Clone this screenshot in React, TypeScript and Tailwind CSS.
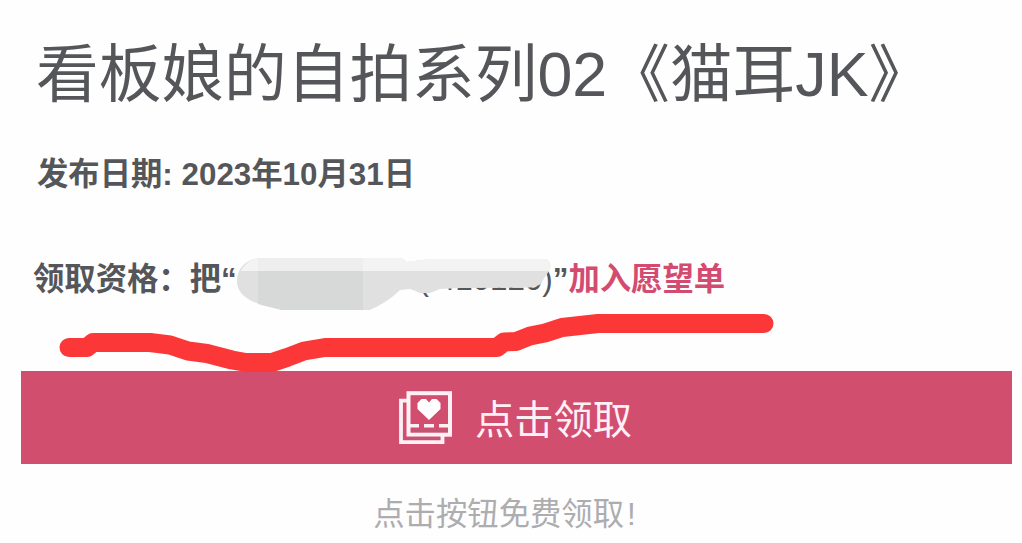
const sans = "font-['Liberation_Sans','Noto_Sans_CJK_SC',sans-serif]";

function GalleryIcon() {
  return (
    <svg width="54" height="54" viewBox="0 0 54 54" fill="none" className="shrink-0">
      <path d="M9 9.7H2V51.2H43.5V44" stroke="#fff0f5" strokeWidth="3.8" />
      <rect x="9.5" y="2.2" width="41.5" height="41.5" stroke="#fff0f5" strokeWidth="4" />
      <path d="M30 29 18.5 18V12L22.5 8H27L30 11.5 33 8H37.5L41.5 12V18Z" fill="#fff" />
      <path d="M11 34.7h9M25 34.7h10M40 34.7h10" stroke="#fff0f5" strokeWidth="3.4" />
      <path d="M12 39.5h37M6 46.8h35" stroke="#bd5874" strokeWidth="2" />
    </svg>
  );
}

// Smudge that hides the product name
function Smudge() {
  return (
    <svg width="340" height="60" viewBox="230 255 340 60" className="absolute -left-[7px] -top-[3px]">
      <path d="M258 258H402L406 262 430 259H546Q553 263 549 271L543 280Q541 287 530 287.5L460 288 440 289 430 293H420L411 289 400 290Q388 302 370 310H282L262 305Q236 297 237 280 238 262 258 258Z" fill="#e0e0e0" />
      <path d="M258 258H402L406 262 430 259H546Q553 263 549 271H241Q246 261 258 258Z" fill="#f3f3f3" />
      <path d="M258 258H363V271H258Z" fill="#eeeeee" />
      <path d="M258 271H363V310H282L258 304Z" fill="#d7d8d8" />
    </svg>
  );
}

function Underline() {
  return (
    <svg width="730" height="70" viewBox="50 305 730 70" className="absolute left-[50px] top-[305px]">
      <path
        d="M69 347.5H87L93 342.5H150L170 345 188 351 207 353.5 232 360 246 362.5H272L287 357.5 304 351 325 347.5H497L504 342 516 341.5 530 336 545 333 562 327.5 580 325.5 598 323.5H764"
        fill="none"
        stroke="#fb3737"
        strokeWidth="19"
        strokeLinecap="round"
        strokeLinejoin="round"
      />
    </svg>
  );
}

export default function App() {
  return (
    <main className={`relative flex h-[543px] w-[1022px] flex-col overflow-hidden bg-[#fefefe] text-[#55565a] ${sans}`}>
      <h1 className="mt-[42px] ml-[36px] h-[64px] whitespace-nowrap text-[62.7px] leading-[64px]">
        看板娘的自拍系列02《猫耳JK》
      </h1>
      <p className="mt-[49px] ml-[37px] h-[40px] whitespace-nowrap text-[31.35px] leading-[40px] font-bold">
        发布日期: 2023年10月31日
      </p>
      <div className="mt-[63px] ml-[33px] flex h-[44px] items-center whitespace-nowrap text-[31.35px] leading-[44px] font-bold">
        <span>领取资格：把“</span>
        <span className="relative flex h-[44px] w-[316px] justify-end">
          <span className="font-normal">.(.410120)</span>
          <Smudge />
        </span>
        <span>”</span>
        <a href="#" className="text-[#d34b70]">加入愿望单</a>
      </div>
      <button className="mt-[69px] ml-[21px] flex h-[93px] w-[991px] items-center justify-center gap-[22px] bg-[#d24e6f] pr-[2px] text-[39.3px] text-[#fff0f5]">
        <GalleryIcon />
        <span className="pt-[5px]">点击领取</span>
      </button>
      <p className="mt-[31px] pr-[13px] text-center text-[31.35px] leading-[40px] text-[#adadb0]">
        点击按钮免费领取<span className="pl-[3px]">!</span>
      </p>
      <Underline />
    </main>
  );
}
